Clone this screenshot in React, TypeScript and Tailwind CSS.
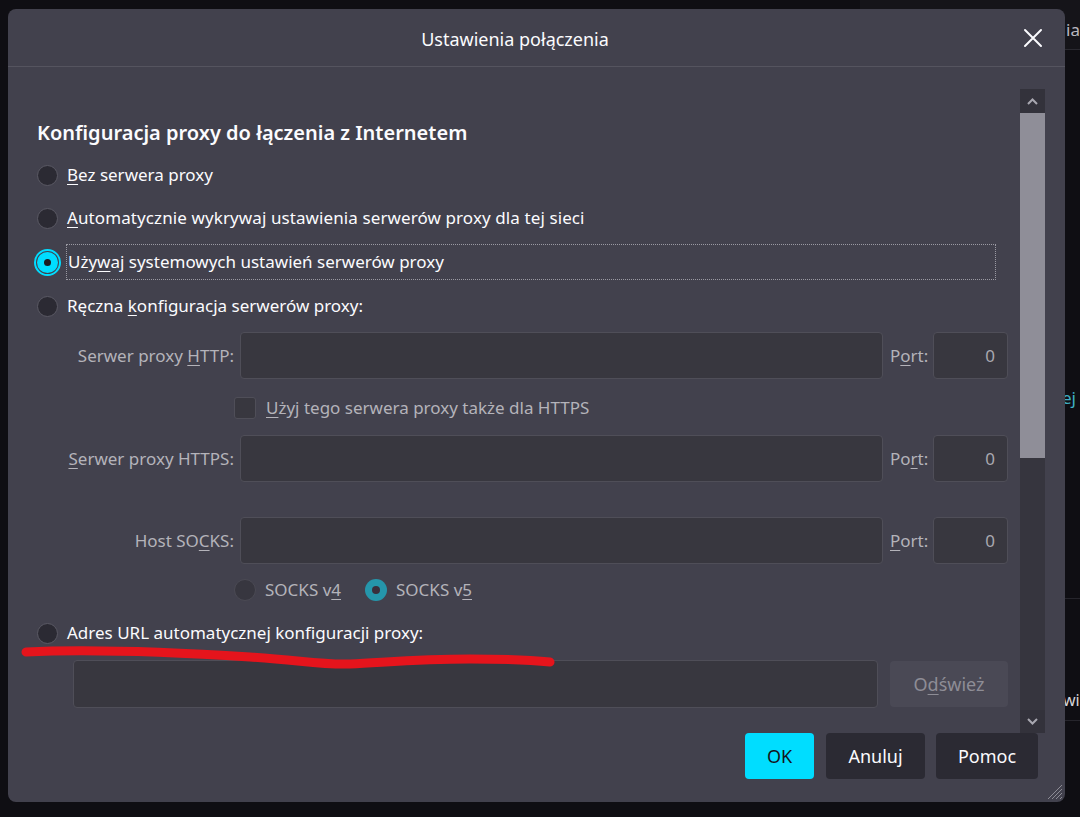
import React from "react";

const U = ({ children }: { children: React.ReactNode }) => (
  <span className="underline underline-offset-[3px] decoration-1">{children}</span>
);

const Radio = ({ state }: { state: "off" | "on" | "disabled" | "teal" }) => {
  if (state === "on")
    return (
      <span className="flex items-center justify-center w-[21px] h-[21px] shrink-0 rounded-full bg-[#00ddff] outline-2 outline-offset-1 outline-[#00ddff]">
        <span className="w-[7px] h-[7px] rounded-full bg-[#1c1b22]" />
      </span>
    );
  if (state === "teal")
    return (
      <span className="flex items-center justify-center w-[22px] h-[22px] shrink-0 rounded-full bg-[#2596ab]">
        <span className="w-[8px] h-[8px] rounded-full bg-[#3a2f3c]" />
      </span>
    );
  if (state === "disabled")
    return <span className="w-[22px] h-[22px] shrink-0 rounded-full bg-[#37363f] border border-[#4b4a54]" />;
  return <span className="w-[21px] h-[21px] shrink-0 rounded-full bg-[#2b2a33] border border-[#5a5964]" />;
};

const Input = ({ className = "", children }: { className?: string; children?: React.ReactNode }) => (
  <div className={`h-[47px] rounded-[4px] bg-[#38373f] border border-[#4f4e58] flex items-center justify-end pr-[12px] text-[#a9a8b0] ${className}`}>
    {children}
  </div>
);

const ProxyRow = ({ label, port, mt }: { label: React.ReactNode; port: React.ReactNode; mt: string }) => (
  <div className={`flex items-center ${mt}`}>
    <div className="w-[197px] text-right text-[#b4b3ba] whitespace-nowrap">{label}</div>
    <Input className="ml-[6px] flex-1" />
    <div className="ml-[7px] w-[38px] text-[#b4b3ba] whitespace-nowrap">{port}</div>
    <Input className="ml-[5px] w-[75px]">0</Input>
  </div>
);

export default function App() {
  return (
    <div className="relative w-[1080px] h-[817px] overflow-hidden bg-[#0f0e13] pl-[8px] pt-[9px] text-[17px] text-[#fbfbfe] font-['Noto_Sans',sans-serif]">
      {/* window behind (right edge) */}
      <div className="absolute left-[860px] top-[0px] w-[220px] h-[50px] bg-[#151419] border-b border-[#2a2930]" />
      <div className="absolute left-[1066px] top-[19px] text-[17px] leading-[22px] text-[#b9b8bf]">ia</div>
      <div className="absolute left-[1062px] top-[387px] text-[17px] leading-[22px] text-[#3fb1c6]">ej</div>
      <div className="absolute left-[1065px] top-[598px] w-[15px] h-px bg-[#26252c]" />
      <div className="absolute left-[1063px] top-[689px] text-[16px] leading-[22px] text-[#d6d5da]">wi</div>
      <div className="absolute left-[1065px] top-[720px] w-[15px] h-px bg-[#26252c]" />

      <div className="relative w-[1057px] h-[793px] rounded-[8px] bg-[#42414d] flex flex-col">
        {/* header */}
        <div className="h-[58px] shrink-0 flex items-center border-b border-[#55545f]">
          <div className="flex-1 text-center pl-[14px] pt-[3px] text-[18px]">Ustawienia połączenia</div>
          <button className="w-[50px] h-[40px] flex items-center justify-center mr-[7px]">
            <svg width="20" height="20" viewBox="0 0 20 20" fill="none" stroke="#fbfbfe" strokeWidth="2" strokeLinecap="round">
              <path d="M2 2 L18 18 M18 2 L2 18" />
            </svg>
          </button>
        </div>

        {/* body */}
        <div className="h-[666px] shrink-0 flex pl-[29px] pr-[20px]">
          <div className="flex-1 flex flex-col mr-[12px]">
            <div className="mt-[52px] h-[28px] leading-[28px] text-[20px] font-semibold">
              Konfiguracja proxy do łączenia z Internetem
            </div>
            <div className="mt-[13px] h-[30px] flex items-center gap-[9px]">
              <Radio state="off" />
              <span><U>B</U>ez serwera proxy</span>
            </div>
            <div className="mt-[13px] h-[30px] flex items-center gap-[9px]">
              <Radio state="off" />
              <span className="tracking-[0.1px]"><U>A</U>utomatycznie wykrywaj ustawienia serwerów proxy dla tej sieci</span>
            </div>
            <div className="mt-[11px] h-[36px] flex items-center gap-[8px]">
              <Radio state="on" />
              <span className="w-[930px] h-[36px] flex items-center pl-[1px] border border-dotted border-[#9a99a2]">
                Uży<U>w</U>aj systemowych ustawień serwerów proxy
              </span>
            </div>
            <div className="mt-[11px] h-[30px] flex items-center gap-[9px]">
              <Radio state="off" />
              <span>Ręczna <U>k</U>onfiguracja serwerów proxy:</span>
            </div>

            <ProxyRow mt="mt-[11px]" label={<>Serwer proxy <U>H</U>TTP:</>} port={<>P<U>o</U>rt:</>} />

            <div className="mt-[17px] h-[24px] flex items-center pl-[197px] gap-[10px] text-[#b4b3ba]">
              <span className="w-[22px] h-[22px] rounded-[3px] bg-[#38373f] border border-[#4f4e58]" />
              <span><U>U</U>żyj tego serwera proxy także dla HTTPS</span>
            </div>

            <ProxyRow mt="mt-[15px]" label={<><U>S</U>erwer proxy HTTPS:</>} port={<>Po<U>r</U>t:</>} />
            <ProxyRow mt="mt-[35px]" label={<>Host SO<U>C</U>KS:</>} port={<><U>P</U>ort:</>} />

            <div className="mt-[13px] h-[26px] flex items-center pl-[197px] text-[#b4b3ba]">
              <Radio state="disabled" />
              <span className="ml-[9px] w-[100px]">SOCKS v<U>4</U></span>
              <Radio state="teal" />
              <span className="ml-[9px]">SOCKS v<U>5</U></span>
            </div>

            <div className="mt-[15px] h-[30px] flex items-center gap-[9px]">
              <Radio state="off" />
              <span>Adres URL automatycznej konfiguracji proxy:</span>
            </div>

            <div className="mt-[12px] flex items-center">
              <Input className="ml-[36px] flex-1 h-[48px]" />
              <div className="ml-[12px] w-[118px] h-[46px] rounded-[4px] bg-[#4a4955] flex items-center justify-center text-[18px] text-[#8e8d96]">
                O<U>d</U>śwież
              </div>
            </div>
          </div>

          {/* scrollbar */}
          <div className="w-[25px] mt-[22px] flex flex-col bg-[#36353e]">
            <div className="h-[24px] flex items-center justify-center bg-[#33323b]">
              <svg width="11" height="7" viewBox="0 0 11 7" fill="none" stroke="#a8a7b0" strokeWidth="2">
                <path d="M1 6 L5.5 1.5 L10 6" />
              </svg>
            </div>
            <div className="h-[345px] bg-[#8f8e98]" />
            <div className="flex-1" />
            <div className="h-[23px] flex items-center justify-center bg-[#33323b]">
              <svg width="11" height="7" viewBox="0 0 11 7" fill="none" stroke="#a8a7b0" strokeWidth="2">
                <path d="M1 1 L5.5 5.5 L10 1" />
              </svg>
            </div>
          </div>
        </div>

        {/* footer */}
        <div className="flex justify-end gap-[11px] pr-[27px] text-[18px]">
          <button className="w-[69px] h-[46px] rounded-[4px] bg-[#00ddff] text-[#15141a]">OK</button>
          <button className="w-[99px] h-[46px] rounded-[4px] bg-[#2b2a33] text-[#fbfbfe] ml-[1px]">Anuluj</button>
          <button className="w-[102px] h-[46px] rounded-[4px] bg-[#2b2a33] text-[#fbfbfe]">Pomoc</button>
        </div>

        {/* resize grip */}
        <svg className="absolute right-[2px] bottom-[2px]" width="18" height="18" viewBox="0 0 18 18" stroke="#8d8c95" strokeWidth="1">
          <path d="M17 3 L3 17 M17 7 L7 17 M17 11 L11 17 M17 15 L15 17" />
        </svg>
      </div>

      {/* red annotation scribble */}
      <svg className="absolute left-0 top-0 pointer-events-none" width="1080" height="817" viewBox="0 0 1080 817" fill="none">
        <path
          d="M26 652 C 90 649, 170 652, 250 657 C 300 660, 320 665, 350 664 C 390 662, 420 659, 470 659 C 510 659, 530 660, 550 662"
          stroke="#e5141c"
          strokeWidth="9"
          strokeLinecap="round"
        />
      </svg>
    </div>
  );
}
